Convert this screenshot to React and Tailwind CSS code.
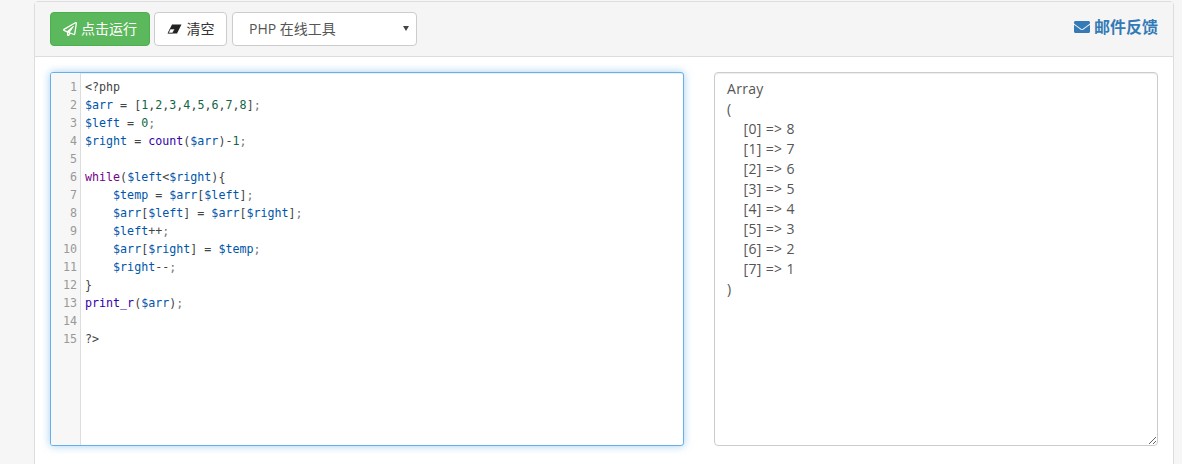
import { FaEnvelope, FaRegPaperPlane } from "react-icons/fa"

const uiFont = "font-['Open_Sans','Noto_Sans_CJK_SC',sans-serif]"

const V = ({ children }) => <span className="text-[#0055aa]">{children}</span>
const N = ({ children }) => <span className="text-[#116644]">{children}</span>
const K = ({ children }) => <span className="text-[#770088]">{children}</span>
const B = ({ children }) => <span className="text-[#3300aa]">{children}</span>
const P = ({ children }) => <span className="text-[#777777]">{children}</span>

const codeLines = [
  <>{"<?php"}</>,
  <><V>$arr</V> = [<N>1</N>,<N>2</N>,<N>3</N>,<N>4</N>,<N>5</N>,<N>6</N>,<N>7</N>,<N>8</N>]<P>;</P></>,
  <><V>$left</V> = <N>0</N><P>;</P></>,
  <><V>$right</V> = <B>count</B>(<V>$arr</V>)-<N>1</N><P>;</P></>,
  <></>,
  <><K>while</K>(<V>$left</V>{"<"}<V>$right</V>){"{"}</>,
  <>{"    "}<V>$temp</V> = <V>$arr</V>[<V>$left</V>]<P>;</P></>,
  <>{"    "}<V>$arr</V>[<V>$left</V>] = <V>$arr</V>[<V>$right</V>]<P>;</P></>,
  <>{"    "}<V>$left</V>++<P>;</P></>,
  <>{"    "}<V>$arr</V>[<V>$right</V>] = <V>$temp</V><P>;</P></>,
  <>{"    "}<V>$right</V>--<P>;</P></>,
  <>{"}"}</>,
  <><B>print_r</B>(<V>$arr</V>)<P>;</P></>,
  <></>,
  <>{"?>"}</>,
]

const output = `Array
(
    [0] => 8
    [1] => 7
    [2] => 6
    [3] => 5
    [4] => 4
    [5] => 3
    [6] => 2
    [7] => 1
)
`

function EraserIcon() {
  return (
    <svg width="15" height="10" viewBox="0 0 15 10" className="shrink-0">
      <path d="M5 0.5H14.5L10 9.5H0.5Z" fill="#222" />
      <path d="M3.2 5H7.8L5.6 9H1.4Z" fill="#fff" stroke="#222" strokeWidth="0.6" />
    </svg>
  )
}

export default function App() {
  return (
    <div className={`h-[464px] overflow-hidden bg-[#f6f6f6] pt-px pl-[34px] pr-[8px] text-[#555555] ${uiFont}`}>
      <div className="h-[480px] rounded-t border border-[#dddddd] bg-white">
        {/* Toolbar */}
        <div className="flex h-[55px] items-start justify-between border-b border-[#dddddd] bg-[#f5f5f5] pl-[15px] pr-[15px] pt-[10px]">
          <div className="flex gap-[4px]">
            <button className="flex h-[34px] w-[100px] items-center justify-center gap-[4px] rounded border border-[#4cae4c] bg-[#5cb85c] text-sm text-white">
              <FaRegPaperPlane className="text-[14px]" />
              点击运行
            </button>
            <button className="flex h-[34px] w-[73px] items-center justify-center gap-[5px] rounded border border-[#cccccc] bg-white text-sm text-[#333333]">
              <EraserIcon />
              清空
            </button>
            <div className="relative ml-[1px]">
              <select
                defaultValue="php"
                className="h-[34px] w-[185px] appearance-none rounded border border-[#cccccc] bg-white pl-[16px] pr-3 text-sm text-[#555555]"
              >
                <option value="php">PHP 在线工具</option>
              </select>
              <span className="pointer-events-none absolute right-[8px] top-[14px] h-0 w-0 border-x-[3px] border-t-[5px] border-x-transparent border-t-[#444444]" />
            </div>
          </div>
          <a className="mt-[3px] flex items-center gap-[4px] text-base font-bold text-[#337ab7]">
            <FaEnvelope className="text-[16px]" />
            邮件反馈
          </a>
        </div>

        {/* Editor and result */}
        <div className="flex gap-[30px] pl-[15px] pr-[15px] pt-[15px]">
          <div className="flex h-[374px] w-[634px] overflow-hidden rounded-[3px] border border-[#66afe9] bg-white shadow-[inset_0_1px_1px_rgba(0,0,0,0.075),0_0_8px_rgba(102,175,233,0.6)]">
            <div className="w-[30px] shrink-0 border-r border-[#dddddd] bg-[#f7f7f7] pr-[3px] pt-[5px] text-right font-['DejaVu_Sans_Mono',monospace] text-[11.67px] leading-[18px] text-[#999999]">
              {codeLines.map((_, i) => (
                <div key={i} className="h-[18px]">{i + 1}</div>
              ))}
            </div>
            <pre className="flex-1 pl-[4px] pt-[5px] font-['DejaVu_Sans_Mono',monospace] text-[11.67px] leading-[18px] text-[#444444]">
              {codeLines.map((line, i) => (
                <div key={i} className="h-[18px]">{line}</div>
              ))}
            </pre>
          </div>
          <textarea
            readOnly
            defaultValue={output}
            className="h-[374px] flex-1 rounded border border-[#cccccc] bg-white px-3 py-[6px] text-sm leading-[20px] tracking-[0.3px] [word-spacing:0.2px] text-[#555555] outline-none shadow-[inset_0_1px_1px_rgba(0,0,0,0.075)]"
          />
        </div>
      </div>
    </div>
  )
}
